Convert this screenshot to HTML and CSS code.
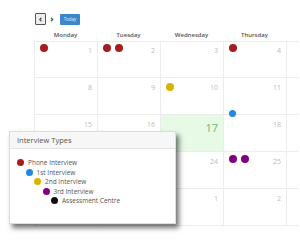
FILE: index.html
```html
<!DOCTYPE html>
<html lang="en">
<head>
  <meta charset="UTF-8" />
  <title>Interview Calendar</title>
  <link rel="stylesheet" href="styles.css">
</head>
<body>

<div class="toolbar">
  <button class="nav-btn prev">&lsaquo;</button>
  <button class="nav-btn next">&rsaquo;</button>
  <button class="today-btn">Today</button>
</div>

<div class="calendar">
  <div class="day-head">Monday</div>
  <div class="day-head">Tuesday</div>
  <div class="day-head">Wednesday</div>
  <div class="day-head">Thursday</div>
  <div class="day-head"></div>

  <!-- week 1 -->
  <div class="cell"><div class="dots"><span class="dot phone"></span></div><span class="num">1</span></div>
  <div class="cell"><div class="dots"><span class="dot phone"></span><span class="dot phone"></span></div><span class="num">2</span></div>
  <div class="cell"><div class="dots"></div><span class="num">3</span></div>
  <div class="cell"><div class="dots"><span class="dot phone"></span></div><span class="num">4</span></div>
  <div class="cell"></div>

  <!-- week 2 -->
  <div class="cell"><div class="dots"></div><span class="num">8</span></div>
  <div class="cell"><div class="dots"></div><span class="num">9</span></div>
  <div class="cell"><div class="dots low"><span class="dot second"></span></div><span class="num">10</span></div>
  <div class="cell"><div class="dots bottom"><span class="dot first small"></span></div><span class="num">11</span></div>
  <div class="cell"></div>

  <!-- week 3 -->
  <div class="cell"><div class="dots"></div><span class="num">15</span></div>
  <div class="cell"><div class="dots"></div><span class="num">16</span></div>
  <div class="cell today"><div class="dots"></div><span class="num">17</span></div>
  <div class="cell"><div class="dots"></div><span class="num">18</span></div>
  <div class="cell"></div>

  <!-- week 4 (Mon/Tue sit under the legend) -->
  <div class="cell"></div>
  <div class="cell"></div>
  <div class="cell"><div class="dots"></div><span class="num">24</span></div>
  <div class="cell"><div class="dots"><span class="dot third"></span><span class="dot third"></span></div><span class="num">25</span></div>
  <div class="cell"></div>

  <!-- week 5 -->
  <div class="cell"></div>
  <div class="cell"></div>
  <div class="cell"><div class="dots"></div><span class="num">1</span></div>
  <div class="cell"><div class="dots"></div><span class="num">2</span></div>
  <div class="cell"></div>
</div>

<!-- Legend -->
<div class="legend">
  <div class="legend-head">Interview Types</div>
  <ul class="legend-list">
    <li class="lvl0"><span class="dot phone"></span>Phone Interview</li>
    <li class="lvl1"><span class="dot first"></span>1st Interview</li>
    <li class="lvl2"><span class="dot second"></span>2nd Interview</li>
    <li class="lvl3"><span class="dot third"></span>3rd Interview</li>
    <li class="lvl4"><span class="dot centre"></span>Assessment Centre</li>
  </ul>
</div>

</body>
</html>
```

FILE: styles.css
```css
body {
  margin: 0;
  width: 300px;
  height: 240px;
  overflow: hidden;
  background: #fff;
  font-family: 'Open Sans', 'DejaVu Sans', sans-serif;
  color: #444;
  position: relative;
}

.toolbar {
  display: flex;
  align-items: center;
  gap: 1px;
  padding: 13px 0 0 35px;
  height: 12px;
}

.nav-btn {
  width: 10px;
  height: 12px;
  padding: 0;
  border: none;
  background: #fff;
  color: #333;
  font-family: inherit;
  font-size: 9px;
  font-weight: bold;
  line-height: 10px;
}

.prev {
  width: 11px;
  border: 1px solid #555;
  background: #eee;
  border-radius: 1px;
}

.today-btn {
  margin-left: 2px;
  width: 20px;
  height: 11px;
  padding: 0;
  border: none;
  border-radius: 1px;
  background: #3a87c9;
  color: #e8f0f8;
  font-family: inherit;
  font-size: 4.5px;
  line-height: 11px;
}

.calendar {
  display: grid;
  grid-template-columns: repeat(4, 63px) 13px;
  grid-template-rows: 16px;
  grid-auto-rows: 37px;
  margin-left: 34px;
  width: 266px;
}

.day-head {
  height: 16px;
  line-height: 20px;
  text-align: center;
  font-size: 6px;
  font-weight: 600;
  color: #555;
  border-bottom: 1px solid #ececec;
}

.cell {
  display: flex;
  border-left: 1px solid #ececec;
  border-bottom: 1px solid #ececec;
  padding: 3px 5px 0 5px;
  box-sizing: border-box;
}

.dots {
  display: flex;
  gap: 4px;
  height: 8px;
}

.dots.low {
  margin-top: 2px;
}

.dots.bottom {
  margin-top: 29px;
}

.num {
  margin-left: auto;
  margin-top: 3px;
  font-size: 7px;
  line-height: 8px;
  color: #bbb;
}

.today {
  background: #e6fae6;
}

.today .num {
  font-size: 11px;
  line-height: 12px;
  margin-top: 4px;
  color: #72b572;
}

.dot {
  display: inline-block;
  width: 8px;
  height: 8px;
  border-radius: 50%;
  flex-shrink: 0;
}

.dot.small {
  width: 7px;
  height: 7px;
}

.phone { background: #a51d1d; }
.first { background: #1e88e5; }
.second { background: #d8b300; }
.third { background: #800080; }
.centre { background: #111; }

.legend {
  position: absolute;
  left: 9px;
  top: 131px;
  width: 167px;
  height: 93px;
  background: #fff;
  border: 1px solid #ddd;
  box-sizing: border-box;
  box-shadow: 3px 4px 5px rgba(0,0,0,0.55);
}

.legend-head {
  height: 17px;
  line-height: 16px;
  padding-left: 7px;
  font-size: 7.5px;
  color: #555;
  background: #f7f7f7;
  border-bottom: 1px solid #e3e3e3;
  box-sizing: border-box;
}

.legend-list {
  list-style: none;
  margin: 0;
  padding: 9px 0 0 7px;
}

.legend-list li {
  display: flex;
  align-items: center;
  gap: 4px;
  height: 9.5px;
  font-size: 6.5px;
  color: #555;
}

.legend-list .dot {
  width: 7px;
  height: 7px;
}

.lvl1 { padding-left: 8.5px; }
.lvl2 { padding-left: 17px; }
.lvl3 { padding-left: 25.5px; }
.lvl4 { padding-left: 34px; }
```
